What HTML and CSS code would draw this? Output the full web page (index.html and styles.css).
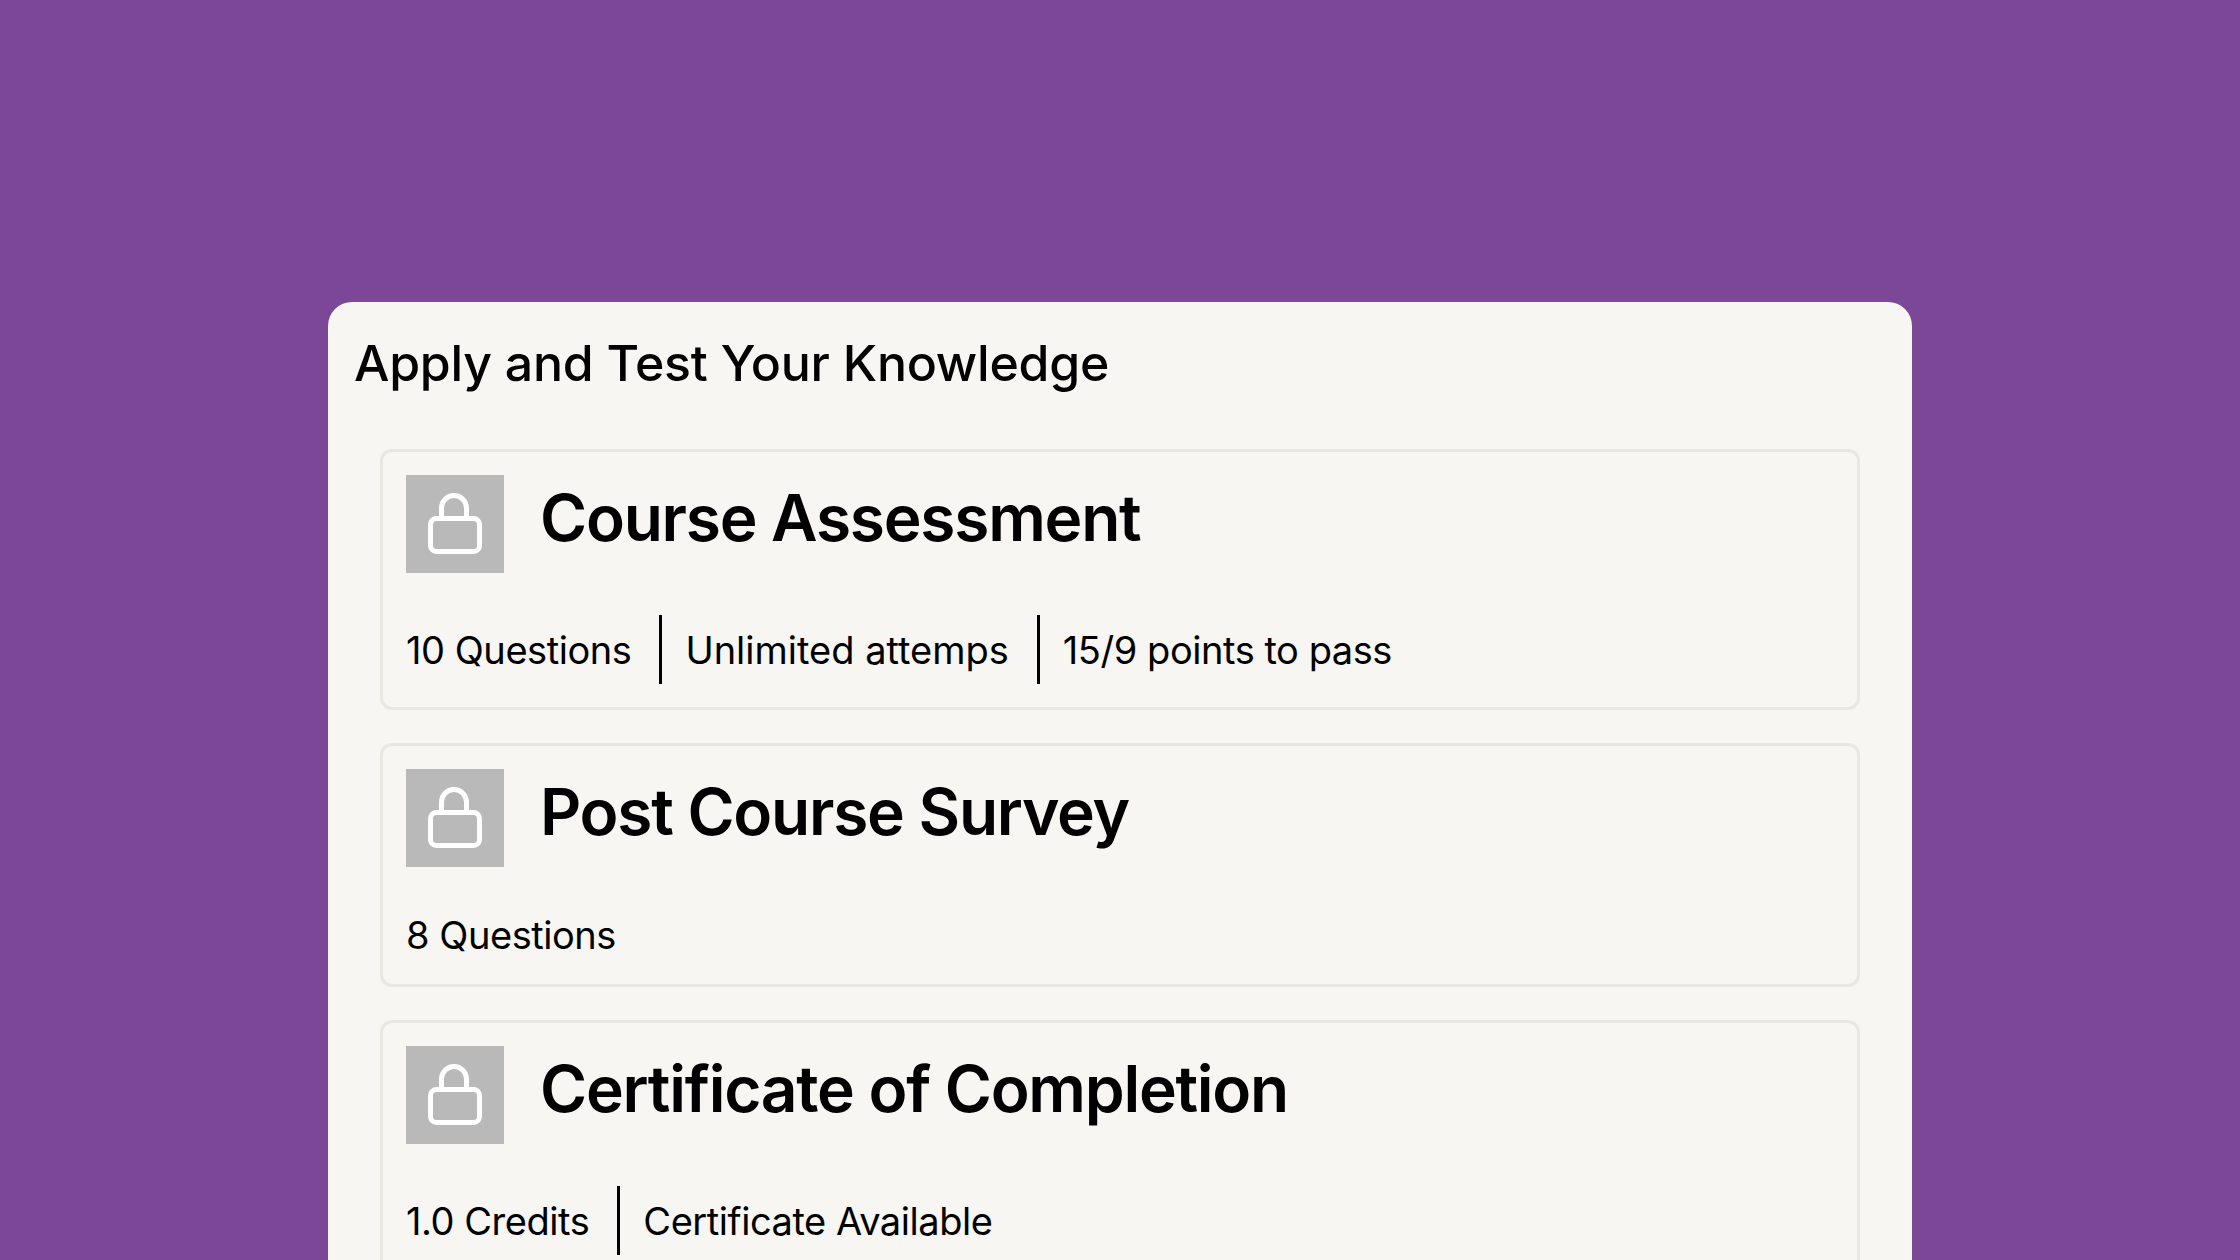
FILE: index.html
```html
<!DOCTYPE html>
<html lang="en">
<head>
<meta charset="utf-8">
<title>Apply and Test Your Knowledge</title>
<link rel="stylesheet" href="styles.css">
</head>
<body>
<main class="panel">
  <h2 class="panel-title">Apply and Test Your Knowledge</h2>
  <div class="card-list">
    <article class="card">
      <div class="card-head">
        <div class="lock"><svg viewBox="0 0 98 98" width="98" height="98"><rect x="24.5" y="43.5" width="49" height="33" rx="6"/><path d="M35.5 43V33a12.5 12.5 0 0 1 25 0V43"/></svg></div>
        <h3 class="card-title">Course Assessment</h3>
      </div>
      <ul class="meta">
        <li>10 Questions</li>
        <li class="meta-wide">Unlimited attemps</li>
        <li>15/9 points to pass</li>
      </ul>
    </article>
    <article class="card">
      <div class="card-head">
        <div class="lock"><svg viewBox="0 0 98 98" width="98" height="98"><rect x="24.5" y="43.5" width="49" height="33" rx="6"/><path d="M35.5 43V33a12.5 12.5 0 0 1 25 0V43"/></svg></div>
        <h3 class="card-title">Post Course Survey</h3>
      </div>
      <ul class="meta">
        <li>8 Questions</li>
      </ul>
    </article>
    <article class="card">
      <div class="card-head">
        <div class="lock"><svg viewBox="0 0 98 98" width="98" height="98"><rect x="24.5" y="43.5" width="49" height="33" rx="6"/><path d="M35.5 43V33a12.5 12.5 0 0 1 25 0V43"/></svg></div>
        <h3 class="card-title">Certificate of Completion</h3>
      </div>
      <ul class="meta">
        <li>1.0 Credits</li>
        <li>Certificate Available</li>
      </ul>
    </article>
  </div>
</main>
</body>
</html>
```
FILE: styles.css
```css
html, body {
  margin: 0;
  height: 1260px;
  overflow: hidden;
}
body {
  background: #7c4797;
  color: #000;
  font-family: Inter, "Liberation Sans", sans-serif;
  padding-top: 302px;
  box-sizing: border-box;
}
.panel {
  width: 1584px;
  margin: 0 auto;
  padding: 30px 52px 40px;
  box-sizing: border-box;
  background: #f7f6f2;
  border-radius: 24px;
}
.panel-title {
  margin: 0 0 55px -26px;
  font-size: 50px;
  line-height: 62px;
  font-weight: 500;
  letter-spacing: -0.25px;
}
.card-list {
  display: flex;
  flex-direction: column;
  gap: 33px;
}
.card {
  border: 3px solid #e8e7e0;
  border-radius: 12px;
  padding: 23px 22px 23px 23px;
}
.card-head {
  display: flex;
  align-items: flex-start;
  gap: 36px;
}
.lock {
  flex: none;
  width: 98px;
  height: 98px;
  background: #b9b9b9;
}
.lock svg {
  display: block;
  fill: none;
  stroke: #fff;
  stroke-width: 5;
}
.card-title {
  margin: 0;
  font-size: 64px;
  line-height: 86px;
  font-weight: 600;
  letter-spacing: -1.25px;
}
.meta {
  list-style: none;
  margin: 42px 0 0;
  padding: 0;
  display: flex;
  font-size: 38px;
  line-height: 52px;
  letter-spacing: -0.45px;
}
.meta li {
  display: flex;
  align-items: center;
}
.meta li + li {
  margin-left: 28px;
  padding: 8.5px 0 8.5px 23px;
  border-left: 3px solid #000;
}
.meta .meta-wide {
  letter-spacing: 0;
}
```
